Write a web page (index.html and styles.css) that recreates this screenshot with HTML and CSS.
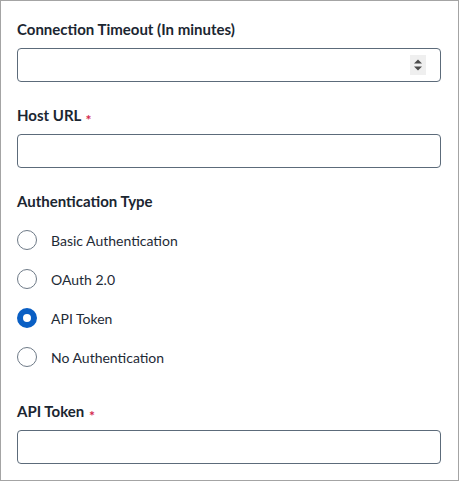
FILE: index.html
```html
<!DOCTYPE html>
<html lang="en">
<head>
<meta charset="utf-8">
<link rel="stylesheet" href="styles.css">
</head>
<body>
<div class="panel">
  <div class="field">
    <label class="label">Connection Timeout (In minutes)</label>
    <div class="input number">
      <span class="fill"></span>
      <span class="spinner">
        <svg width="10" height="14" viewBox="0 0 10 14"><path d="M1 5.5 L5 1.5 L9 5.5 Z" fill="#4a4a4a"/><path d="M1 8.5 L5 12.5 L9 8.5 Z" fill="#4a4a4a"/></svg>
      </span>
    </div>
  </div>
  <div class="field">
    <label class="label">Host URL <span class="req">*</span></label>
    <div class="input"></div>
  </div>
  <div class="field group">
    <label class="label">Authentication Type</label>
    <div class="radios">
      <div class="radio"><span class="dot"></span><span class="rtext">Basic Authentication</span></div>
      <div class="radio"><span class="dot"></span><span class="rtext">OAuth 2.0</span></div>
      <div class="radio"><span class="dot on"></span><span class="rtext">API Token</span></div>
      <div class="radio"><span class="dot"></span><span class="rtext">No Authentication</span></div>
    </div>
  </div>
  <div class="field">
    <label class="label">API Token <span class="req">*</span></label>
    <div class="input"></div>
  </div>
</div>
</body>
</html>
```
FILE: styles.css
```css
* { box-sizing: border-box; }
html, body { margin: 0; padding: 0; background: #fff; }
body { font-family: "Lato", "Open Sans", sans-serif; color: #1e2a36; }
.panel {
  width: 459px;
  height: 481px;
  border: 1px solid #a4a4a4;
  padding: 18px 17px 0 16px;
  display: flex;
  flex-direction: column;
}
.field { display: flex; flex-direction: column; margin-bottom: 23px; }
.label {
  font-size: 15px;
  font-weight: 700;
  line-height: 20px;
  height: 20px;
  margin-bottom: 9px;
  color: #1b2631;
}
.req { color: #d3264d; font-weight: 700; font-size: 14px; margin-left: 1px; vertical-align: -4px; line-height: 1; }
.input {
  height: 34px;
  border: 1px solid #5c6b7a;
  border-radius: 4px;
  display: flex;
  align-items: center;
}
.fill { flex: 1; }
.spinner {
  width: 16px;
  height: 20px;
  background: #efefef;
  display: flex;
  align-items: center;
  justify-content: center;
  margin-right: 14px;
}
.group { margin-bottom: 34px; }
.group .label { margin-bottom: 0; }
.radios { display: flex; flex-direction: column; gap: 19px; padding-top: 19px; }
.radio { display: flex; align-items: center; height: 20px; }
.dot {
  width: 20px;
  height: 20px;
  border-radius: 50%;
  border: 1.5px solid #6e7a87;
  margin-right: 14px;
  flex: none;
}
.dot.on { border: 6px solid #0a5fc4; }
.rtext { font-size: 14px; color: #1e2a36; }
```
